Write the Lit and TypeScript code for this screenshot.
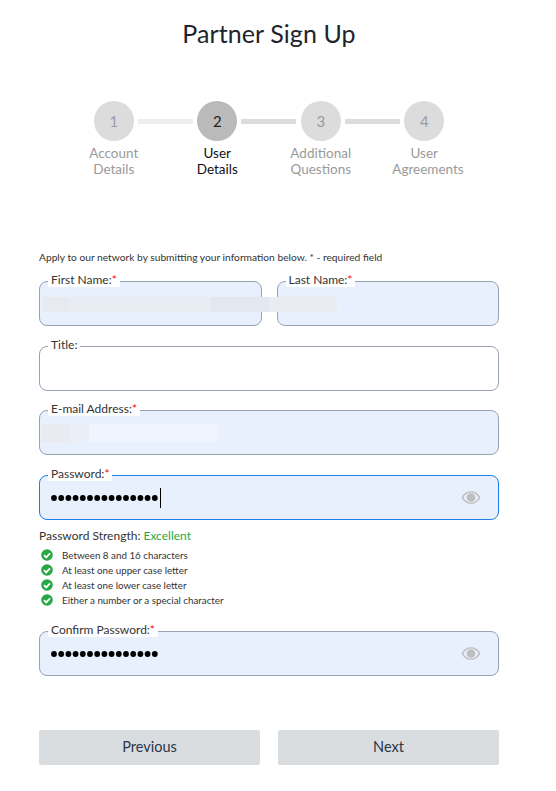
import { LitElement, html, css, svg } from "lit";
import { customElement } from "lit/decorators.js";

const eye = html`<svg class="eye" viewBox="0 0 22 16" width="20" height="15" aria-hidden="true">
  <path fill-rule="evenodd" fill="#bebebe" d="M11 1C6.2 1 2.4 4 .6 8c1.8 4 5.6 7 10.4 7s8.6-3 10.4-7C19.600 4 15.800 1 11 1zm0 12.600C7.400 13.600 4.200 11.400 2.500 8 4.200 4.600 7.400 2.400 11 2.400s6.800 2.200 8.500 5.600c-1.700 3.400-4.900 5.600-8.500 5.600z"/>
  <circle cx="11" cy="8" r="4.800" fill="#bebebe"/>
</svg>`;

const check = html`<svg class="check" viewBox="0 0 12 12" width="12" height="12" aria-hidden="true">
  <circle cx="6" cy="6" r="5.800" fill="#28a745"/>
  ${svg`<path d="M3 6.200l2.200 2.200L9 4.400" fill="none" stroke="#fff" stroke-width="1.800"/>`}
</svg>`;

const dots = html`<svg class="dots" viewBox="0 0 108 6" width="108" height="6" aria-hidden="true">
  ${Array.from({ length: 15 }, (_, i) => svg`<circle cx="${3 + i * 7.2}" cy="3" r="2.900" fill="#000"/>`)}
</svg>`;

@customElement("app-root")
export class AppRoot extends LitElement {
  static styles = css`
    :host {
      display: block;
      width: 539px;
      height: 791px;
      box-sizing: border-box;
      padding: 0 40px 0 39px;
      font-family: "Lato", "Noto Sans", sans-serif;
      color: #212529;
      background: #fff;
      position: relative;
    }
    h1 {
      margin: 0;
      padding-top: 16px;
      height: 36px;
      line-height: 34px;
      text-align: center;
      font-size: 25px;
      font-weight: 400;
      letter-spacing: 0.08px;
    }
    .steps {
      margin-top: 49px;
      display: grid;
      grid-template-columns: repeat(4, 103.500px);
      justify-content: center;
    }
    .step {
      display: flex;
      flex-direction: column;
      align-items: center;
      position: relative;
      color: #9a9a9a;
      font-size: 13.500px;
      line-height: 16px;
      text-align: center;
    }
    .step.on { color: #111; }
    .text { width: 64px; }
    .num {
      width: 40px;
      height: 40px;
      border-radius: 50%;
      background: #dcdcdc;
      color: #959ca6;
      display: flex;
      align-items: center;
      justify-content: center;
      font-size: 15px;
      margin-bottom: 4px;
    }
    .on .num { background: #bababa; color: #222; }
    .bar {
      position: absolute;
      left: calc(50% + 24px);
      width: 55px;
      top: 18px;
      height: 5px;
      background: #dcdcdc;
    }
    .bar.light { background: #eeeeee; }
    .intro {
      margin: 72px 0 0;
      height: 16px;
      font-size: 10.230px;
      line-height: 16px;
      color: #333;
    }
    .row { display: flex; gap: 15px; margin-top: 16px; }
    .field {
      flex: 1;
      position: relative;
      box-sizing: border-box;
      height: 45px;
      border: 1px solid #98a2b3;
      border-radius: 8px;
      background: #fff;
      display: flex;
      align-items: center;
      padding: 0 17px 0 11px;
      justify-content: space-between;
    }
    .field.fill { background: #e8f0fe; }
    .field.focus { border-color: #1a7fe8; }
    .gap20 { margin-top: 20px; }
    .gap19 { margin-top: 19px; }
    .lab {
      position: absolute;
      left: 8px;
      top: -9px;
      height: 14px;
      padding: 0 3px;
      background: #fff;
      font-size: 12px;
      line-height: 13px;
      color: #333;
      white-space: nowrap;
    }
    .lab b { color: #f00; font-weight: 400; }
    .pass { display: flex; align-items: center; gap: 1px; }
    .dots { display: block; }
    .caret { width: 1px; height: 20px; background: #000; }
    .eye { display: block; }
    .strength {
      margin-top: 7px;
      height: 18px;
      line-height: 18px;
      font-size: 12px;
      color: #333;
    }
    .strength span { color: #28a745; }
    ul { list-style: none; margin: 2px 0 0; padding: 0 0 0 2px; }
    li {
      height: 15px;
      display: flex;
      align-items: center;
      gap: 9px;
      font-size: 9.800px;
      color: #333;
    }
    .confirm { margin-top: 24px; }
    .btns {
      margin-top: 54px;
      display: flex;
      justify-content: space-between;
    }
    button {
      width: 221px;
      height: 35px;
      border: 0;
      border-radius: 2px;
      background: #d9dde0;
      color: #2b3648;
      font: inherit;
      font-size: 14.500px;
      padding: 0 0 2px;
    }
    .blur {
      position: absolute;
      filter: blur(0.500px);
      pointer-events: none;
    }
    .blur.a {
      left: 43px;
      top: 297px;
      width: 294px;
      height: 15px;
      background: linear-gradient(90deg, #e8eaef 0 9%, #e8ecf3 9% 57%, #e3e7ef 57% 77%, #e9ecf0 77% 100%);
    }
    .blur.b {
      left: 41px;
      top: 424px;
      width: 177px;
      height: 18px;
      background: linear-gradient(90deg, #e9ebf0 0 16%, #eaeef6 16% 27%, #eff4fe 27% 100%);
    }
  `;

  render() {
    const steps: [string, string, string][] = [
      ["1", "Account", "Details"],
      ["2", "User", "Details"],
      ["3", "Additional", "Questions"],
      ["4", "User", "Agreements"],
    ];
    const rules = [
      "Between 8 and 16 characters",
      "At least one upper case letter",
      "At least one lower case letter",
      "Either a number or a special character",
    ];
    return html`
      <h1>Partner Sign Up</h1>
      <div class="steps">
        ${steps.map(
          (s, i) => html`<div class="step ${i === 1 ? "on" : ""}">
            <div class="num">${s[0]}</div>
            ${i < 3 ? html`<div class="bar ${i === 0 ? "light" : ""}"></div>` : ""}
            <div class="text">${s[1]}<br />${s[2]}</div>
          </div>`
        )}
      </div>
      <p class="intro">Apply to our network by submitting your information below. * - required field</p>
      <div class="row">
        <div class="field fill"><span class="lab">First Name:<b>*</b></span></div>
        <div class="field fill"><span class="lab">Last Name:<b>*</b></span></div>
      </div>
      <div class="field gap20"><span class="lab">Title:</span></div>
      <div class="field fill gap19"><span class="lab">E-mail Address:<b>*</b></span></div>
      <div class="field fill focus gap20">
        <span class="lab">Password:<b>*</b></span>
        <div class="pass">${dots}<div class="caret"></div></div>
        ${eye}
      </div>
      <div class="strength">Password Strength: <span>Excellent</span></div>
      <ul>${rules.map((r) => html`<li>${check}${r}</li>`)}</ul>
      <div class="field fill confirm">
        <span class="lab">Confirm Password:<b>*</b></span>
        ${dots}
        ${eye}
      </div>
      <div class="btns"><button>Previous</button><button>Next</button></div>
      <div class="blur a"></div>
      <div class="blur b"></div>
    `;
  }
}
